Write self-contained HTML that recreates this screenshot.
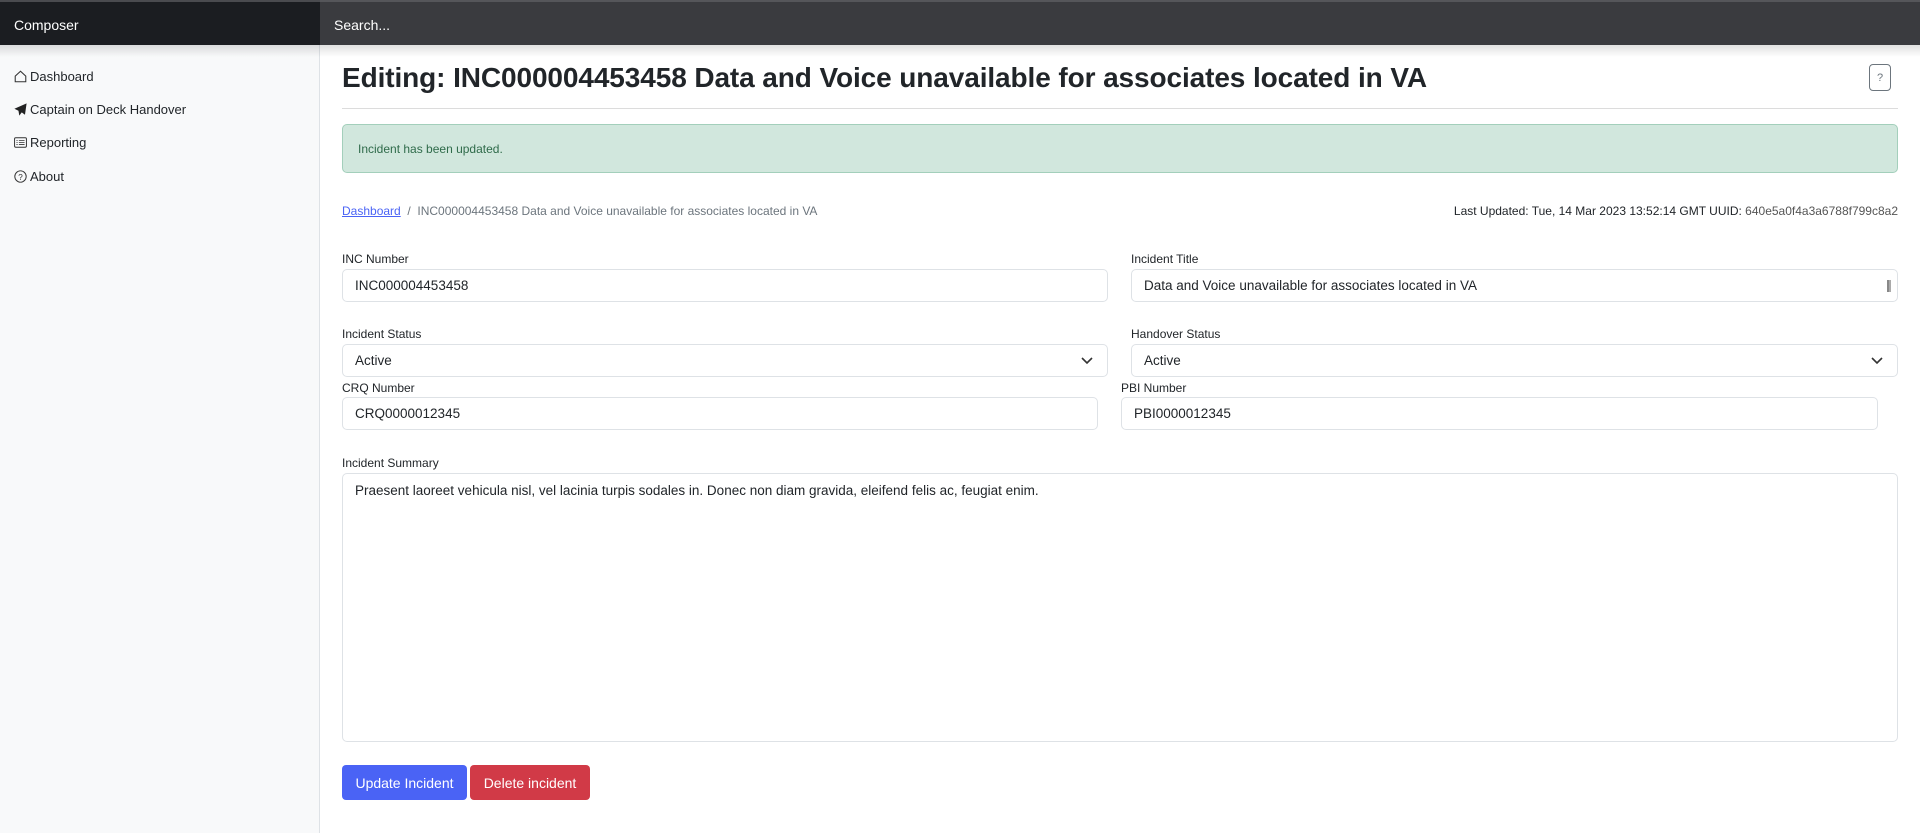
<!DOCTYPE html>
<html><head><meta charset="utf-8"><style>
*{box-sizing:border-box;margin:0;padding:0}
body{width:1920px;height:833px;overflow:hidden;background:#fff;font-family:"Liberation Sans",sans-serif;color:#212529;position:relative}
.a{position:absolute}
.nav1{left:0;top:0;width:320px;height:45px;background:#1b1d21;border-top:2px solid #4a4b4f}
.nav2{left:320px;top:0;width:1600px;height:45px;background:#3a3b3f;border-top:2px solid #55565a}
.side{left:0;top:45px;width:320px;height:788px;background:#f8f9fa;border-right:1px solid #dee2e6}
.shadow{left:0;top:45px;width:1920px;height:12px;background:linear-gradient(rgba(0,0,0,.12),rgba(0,0,0,0))}
.si{left:14px;font-size:13px;color:#212529;display:flex;align-items:center;gap:3px;height:18px}
.lbl{font-size:12px;color:#212529}
.inp{border:1px solid #dee2e6;border-radius:5px;background:#fff;font-size:13.5px;padding-left:12px;display:flex;align-items:center;color:#212529}
.chev{position:absolute;right:14px;top:50%;margin-top:-4px}
.btn{color:#fff;font-size:14px;border-radius:4px;display:flex;align-items:center;justify-content:center}
</style></head><body>
<div class="a nav1"></div>
<div class="a nav2"></div>
<div class="a" style="left:14px;top:17px;color:#fff;font-size:14px">Composer</div>
<div class="a" style="left:334px;top:17px;color:#fff;font-size:14px">Search...</div>
<div class="a side"></div>
<div class="a shadow"></div>

<div class="a si" style="top:67px"><svg width="13" height="13" viewBox="0 0 16 16"><path d="M8 1.5L1.5 7.5V14.5H14.5V7.5Z" fill="none" stroke="#333" stroke-width="1.3"/></svg>Dashboard</div>
<div class="a si" style="top:100px"><svg width="13" height="13" viewBox="0 0 16 16"><path d="M15.5 0.5L0.5 7l5 2.5 1 6 3-4 4 3z" fill="#222"/></svg>Captain on Deck Handover</div>
<div class="a si" style="top:133px"><svg width="13" height="13" viewBox="0 0 16 16"><rect x="0.7" y="2.2" width="14.6" height="11.6" rx="1.5" fill="none" stroke="#333" stroke-width="1.2"/><path d="M3 5.5h1.5M6 5.5h7M3 8h1.5M6 8h7M3 10.5h1.5M6 10.5h7" stroke="#333" stroke-width="1"/></svg>Reporting</div>
<div class="a si" style="top:167px"><svg width="13" height="13" viewBox="0 0 16 16"><circle cx="8" cy="8" r="7" fill="none" stroke="#333" stroke-width="1.2"/><text x="8" y="12" font-size="10" text-anchor="middle" fill="#333" font-family="Liberation Sans">?</text></svg>About</div>

<div class="a" style="left:342px;top:62px;font-size:28px;font-weight:bold;color:#212529;white-space:nowrap;letter-spacing:-0.1px">Editing: INC000004453458 Data and Voice unavailable for associates located in VA</div>
<div class="a" style="left:1869px;top:64px;width:22px;height:27px;border:1px solid #6c757d;border-radius:4px;font-size:11px;color:#6c757d;display:flex;align-items:center;justify-content:center">?</div>
<div class="a" style="left:342px;top:108px;width:1556px;height:1px;background:#dcdcdc"></div>

<div class="a" style="left:342px;top:124px;width:1556px;height:49px;background:#d1e7dd;border:1px solid #a3cfbb;border-radius:5px;color:#2f6b4a;font-size:12px;padding-left:15px;display:flex;align-items:center">Incident has been updated.</div>

<div class="a" style="left:342px;top:204px;font-size:12px;color:#6c757d;white-space:nowrap"><span style="color:#4a63f5;text-decoration:underline">Dashboard</span>&nbsp; / &nbsp;INC000004453458 Data and Voice unavailable for associates located in VA</div>
<div class="a" style="right:22px;top:204px;font-size:12px;color:#212529;white-space:nowrap">Last Updated: Tue, 14 Mar 2023 13:52:14 GMT UUID: <span style="color:#555">640e5a0f4a3a6788f799c8a2</span></div>

<div class="a lbl" style="left:342px;top:252px">INC Number</div>
<div class="a inp" style="left:342px;top:269px;width:766px;height:33px">INC000004453458</div>
<div class="a lbl" style="left:1131px;top:252px">Incident Title</div>
<div class="a inp" style="left:1131px;top:269px;width:767px;height:33px">Data and Voice unavailable for associates located in VA<span style="position:absolute;right:6px;top:10px;width:4px;height:12px;border-left:2px solid #888;border-right:2px solid #aaa"></span></div>

<div class="a lbl" style="left:342px;top:327px">Incident Status</div>
<div class="a inp" style="left:342px;top:344px;width:766px;height:33px">Active<svg class="chev" width="12" height="8" viewBox="0 0 12 8"><path d="M1 1l5 5 5-5" fill="none" stroke="#333" stroke-width="1.6"/></svg></div>
<div class="a lbl" style="left:1131px;top:327px">Handover Status</div>
<div class="a inp" style="left:1131px;top:344px;width:767px;height:33px">Active<svg class="chev" width="12" height="8" viewBox="0 0 12 8"><path d="M1 1l5 5 5-5" fill="none" stroke="#333" stroke-width="1.6"/></svg></div>

<div class="a lbl" style="left:342px;top:381px">CRQ Number</div>
<div class="a inp" style="left:342px;top:397px;width:756px;height:33px">CRQ0000012345</div>
<div class="a lbl" style="left:1121px;top:381px">PBI Number</div>
<div class="a inp" style="left:1121px;top:397px;width:757px;height:33px">PBI0000012345</div>

<div class="a lbl" style="left:342px;top:456px">Incident Summary</div>
<div class="a" style="left:342px;top:473px;width:1556px;height:269px;border:1px solid #dee2e6;border-radius:5px;font-size:13.5px;padding:9px 12px">Praesent laoreet vehicula nisl, vel lacinia turpis sodales in. Donec non diam gravida, eleifend felis ac, feugiat enim.</div>

<div class="a btn" style="left:342px;top:765px;width:125px;height:35px;background:#4a63f5">Update Incident</div>
<div class="a btn" style="left:470px;top:765px;width:120px;height:35px;background:#d13a47">Delete incident</div>
</body></html>
